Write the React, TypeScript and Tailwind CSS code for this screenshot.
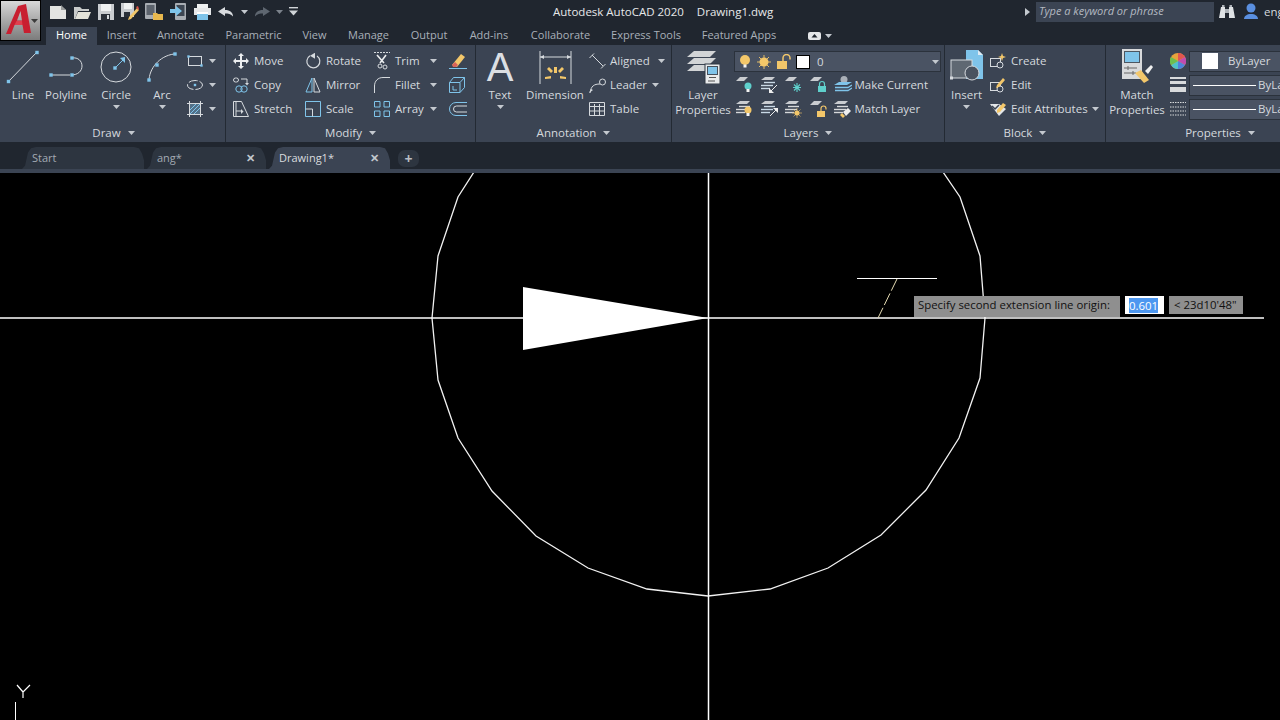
import React from "react";

const B = "#7fc4ea";
const L = "#d6dade";
const G = "#f3c76a";
const T = "#5fd0cc";

function Ic({ w = 16, h = 16, children }: { w?: number; h?: number; children: React.ReactNode }) {
  return (
    <svg width={w} height={h} viewBox={`0 0 ${w} ${h}`} fill="none" className="shrink-0 block">
      {children}
    </svg>
  );
}
const Caret = ({ c = "#c4c9cf" }: { c?: string }) => (
  <svg width="7" height="4" viewBox="0 0 7 4" className="shrink-0 block"><path d="M0 0h7L3.5 4z" fill={c} /></svg>
);
const Sq = ({ x, y, s = 3.4, c = B }: { x: number; y: number; s?: number; c?: string }) => (
  <rect x={x - s / 2} y={y - s / 2} width={s} height={s} fill={c} />
);

/* QAT */
const QNew = () => <Ic w={18} h={16}><path d="M1 2h11l5 4v9H1z" fill="#e3e4e2" /><path d="M12 1l5 5h-5z" fill="#9a9c9c" /></Ic>;
const QOpen = () => <Ic w={18} h={16}><path d="M1 3h6l2 2h7v2H5l-3 8H1z" fill="#c9cbca" /><path d="M5 8h13l-3 7H2z" fill="#e3e2d8" /></Ic>;
const QSave = () => <Ic w={16} h={16}><path d="M0 0h16v16H0z" fill="#c9ccd0" /><path d="M3 0h10v7H3z" fill="#eef0f1" /><path d="M3 10h9v6H3z" fill="#2a3039" /><path d="M9 11h2v4H9z" fill="#d6dade" /></Ic>;
const QSaveAs = () => <Ic w={18} h={18}><path d="M0 0h13v14H0z" fill="#c9ccd0" /><path d="M3 0h8v6H3z" fill="#eef0f1" /><path d="M3 9h6v5H3z" fill="#2a3039" /><path d="M8 14l8-9 2 2-8 9-3 1z" fill={G} /><path d="M15 4l2-1 1 3-1 1z" fill="#d8534b" /></Ic>;
const QCloud = () => <Ic w={18} h={18}><rect x="0" y="0" width="11" height="16" rx="1" fill="#a8adb3" /><rect x="1.5" y="2" width="8" height="10" fill="#5c636d" /><path d="M8 10h4l1 1h5v6H8z" fill="#e8b84e" /></Ic>;
const QCloud2 = () => <Ic w={17} h={18}><rect x="5" y="0" width="11" height="17" rx="1" fill="#a8adb3" /><rect x="6.5" y="2" width="8" height="11" fill="#3d4652" /><path d="M0 6h6V3l6 5-6 5v-3H0z" fill={B} /></Ic>;
const QPrint = () => <Ic w={17} h={16}><path d="M3 0h11v4H3z" fill="#eef0f1" /><path d="M0 4h17v7H0z" fill="#e6e8ea" /><path d="M3 8h11v8H3z" fill={B} /><path d="M3 8h11v2H3z" fill="#fff" /></Ic>;
const QUndo = () => <Ic w={16} h={12}><path d="M7 1L0 5.5 7 10V7.5c3 0 6 .5 8 3 0-4-3-6.5-8-6.5z" fill="#d8dbdf" /></Ic>;
const QRedo = () => <Ic w={16} h={12}><path d="M9 1l7 4.5L9 10V7.5c-3 0-6 .5-8 3 0-4 3-6.5 8-6.5z" fill="#5e6670" /></Ic>;
const QMenu = () => <Ic w={9} h={9}><path d="M0 0h9v1.4H0z" fill="#d0d4d8" /><path d="M0 3.5h9L4.5 8.5z" fill="#d0d4d8" /></Ic>;

/* Draw */
const ILine = () => <Ic w={34} h={34}><path d="M2 32L31 2" stroke={L} /><Sq x={2.5} y={31.5} /><Sq x={31} y={2.5} /></Ic>;
const IPoly = () => <Ic w={36} h={34}><path d="M3 25h19M24 8c6-1 10 3 10 8s-4 9-11 9" stroke={L} /><Sq x={3} y={25} /><Sq x={24} y={8} /><Sq x={24} y={25} /></Ic>;
const ICircle = () => <Ic w={34} h={34}><circle cx="17" cy="17" r="15" stroke={L} /><path d="M16 18L25 9" stroke={B} /><path d="M26 7v6l-5-5z" fill={B} /><Sq x={16} y={18} /></Ic>;
const IArc = () => <Ic w={32} h={34}><path d="M3 31c0-12 10-25 25-27" stroke={L} /><Sq x={3} y={30} /><Sq x={11} y={15} /><Sq x={29} y={4} /></Ic>;
const IRect = () => <Ic w={16} h={12}><rect x="1.5" y="1.5" width="13" height="9" stroke={L} /><Sq x={1.5} y={1.5} s={2.4} /><Sq x={14.5} y={10.5} s={2.4} /></Ic>;
const IEllipse = () => <Ic w={16} h={12}><ellipse cx="8" cy="6" rx="7.500" ry="4.500" stroke={L} strokeDasharray="9 2" /><Sq x={8} y={6} s={2.4} /></Ic>;
const IHatch = () => <Ic w={16} h={16}><path d="M2.500 0v16M13.500 0v16M0 2.500h16M0 13.500h16" stroke={L} /><rect x="3" y="3" width="10" height="10" fill={B} opacity=".35" /><path d="M3 9l6-6M3 13L13 3M7 13l6-6" stroke={B} /></Ic>;

/* Modify */
const IMove = () => <Ic w={16} h={16}><path d="M8 0l3 3H9v4h4V5l3 3-3 3V9H9v4h2l-3 3-3-3h2V9H3v2L0 8l3-3v2h4V3H5z" fill="#eceef0" /></Ic>;
const IRotate = () => <Ic w={16} h={16}><path d="M5 2.800a6.500 6.500 0 1 0 7 .2" stroke={L} strokeWidth="1.200" /><path d="M9 0v6L4 3z" fill={L} transform="translate(1 -.3)" /></Ic>;
const ITrim = () => <Ic w={16} h={18}><path d="M0 .5h16" stroke={L} strokeDasharray="2 1" /><path d="M3 3l7 8M12 3l-6 8" stroke="#eceef0" strokeWidth="1.600" /><circle cx="6" cy="14" r="2" stroke={L} /><circle cx="11" cy="15" r="2" stroke={L} /></Ic>;
const IEraser = () => <Ic w={18} h={18}><path d="M3 13L12 2l4 3-8 10z" fill={G} /><path d="M3 13l3-3 3 3-2 2H4z" fill="#d8635a" /><path d="M0 16.500h18" stroke={B} /></Ic>;
const ICopy = () => <Ic w={16} h={16}><rect x=".5" y="1" width="5" height="4" rx="2" stroke={L} /><path d="M8 2h6v5" stroke={L} /><path d="M12 6h4l-2 2.500z" fill={L} /><circle cx="6" cy="12" r="3.200" stroke={B} /><circle cx="11" cy="12" r="3.200" stroke={B} /></Ic>;
const IMirror = () => <Ic w={16} h={16}><path d="M7 1L1 15h6z" stroke={B} /><path d="M9 1l6 14H9z" stroke={L} /></Ic>;
const IFillet = () => <Ic w={16} h={16}><path d="M.5 16V9C.5 4 4 .5 9 .5h7" stroke={L} /></Ic>;
const IBox = () => <Ic w={16} h={16}><path d="M.5 5.500h10.500v10H.5zM.5 5.500l4-5h11v10l-4.500 5M11 5.500l4.500-5M4 9v4h4" stroke={B} /></Ic>;
const IStretch = () => <Ic w={16} h={16}><path d="M.5.500h8L15.500 15.500H.5z" stroke={L} /><path d="M3 1v14" stroke={L} /><path d="M3 10h5" stroke={L} /><path d="M8 8l2.500 2.500L8 13z" fill={L} /></Ic>;
const IScale = () => <Ic w={16} h={16}><path d="M.5.500h15v15H.5z" stroke={B} /><path d="M.5 8h7v7.500" stroke={L} /></Ic>;
const IArray = () => <Ic w={16} h={16}><path d="M.5.500h5.500v5.500H.5zM10 .5h5.500V6H10zM.5 10H6v5.500H.5zM10 10h5.500v5.500H10z" stroke={B} /></Ic>;
const IOffset = () => <Ic w={18} h={14}><path d="M18 .5H7a6.500 6.500 0 0 0 0 13h11" stroke={B} /><path d="M18 4H7.500a3 3 0 0 0 0 6H18" stroke={L} /></Ic>;

/* Annotation */
const ITextA = () => <span className="block text-[#dcdfe3] text-[40px] leading-[36px] font-['Liberation_Sans',sans-serif]">A</span>;
const IDim = () => <Ic w={33} h={33}><path d="M1 0v33M32 0v33" stroke={L} /><path d="M1 6h31" stroke={L} /><path d="M1 6l4-2v4zM32 6l-4-2v4z" fill={L} /><path d="M15 16h3v6h-3zM8 18l2-2 4 4-2 2zM25 18l-2-2-4 4 2 2zM6 26l6-1v2.500l-6 .5zM27 26l-6-1v2.500l6 .5z" fill={G} /></Ic>;
const IAligned = () => <Ic w={17} h={17}><path d="M3 2l11 11" stroke={L} /><path d="M.5 5L5 .5M12 15.500l4.500-4.500" stroke={L} /></Ic>;
const ILeader = () => <Ic w={17} h={17}><path d="M1 16c1-7 4-9 10-9" stroke={L} /><circle cx="13.500" cy="5" r="3" stroke={L} /><path d="M0 16l2-4 2 1z" fill={L} /></Ic>;
const ITable = () => <Ic w={16} h={14}><path d="M.5.500h15v13H.5zM.5 4.500h15M.5 9h15M5.500 2v11.500M10.500 2v11.500" stroke={L} /></Ic>;

/* Layers */
const Sheet = ({ y, c = "#d2d4d6" }: { y: number; c?: string }) => <path d={`M8 ${y}h22l-6 6H1z`} fill={c} />;
const ILayerProps = () => (
  <Ic w={34} h={34}>
    <Sheet y={1} /><Sheet y={8} /><Sheet y={15} />
    <rect x="19" y="14" width="15" height="20" fill="#e9ebec" stroke="#2f3742" />
    <rect x="21.500" y="16.500" width="10" height="8" fill={B} stroke="#46505c" />
    <path d="M23 27.500h7M29 31H22" stroke="#555" />
  </Ic>
);
const Lay1 = () => <path d="M4 1h8L8 5H0z" fill="#c9ccd0" />;
const Stack = ({ c = "#c9d9e6" }: { c?: string }) => <><path d="M4 1h10l-3 3H0z" fill="#c9ccd0" /><path d="M3 6.500h11" stroke={c} strokeWidth="1.400" /><path d="M0 9.500h12" stroke={c} strokeWidth="1.400" /><path d="M0 12.500h9" stroke={c} strokeWidth="1.400" /></>;
const Bulb = ({ x, y, c, r = 3.500 }: { x: number; y: number; c: string; r?: number }) => <><circle cx={x} cy={y} r={r} fill={c} /><rect x={x - 1.500} y={y + r - .5} width="3" height="3" fill="#f3f3f3" /></>;
const Lock = ({ x, y, c, open }: { x: number; y: number; c: string; open?: boolean }) => <><rect x={x} y={y} width="8" height="6" fill={c} /><path d={open ? `M${x + 4} ${y}v-2.500a2.500 2.500 0 0 1 5 0v1` : `M${x + 1.500} ${y}v-2a2.500 2.500 0 0 1 5 0v2`} stroke={c} strokeWidth="1.200" /></>;
const L1 = () => <Ic w={17} h={18}><Lay1 /><Bulb x={12} y={10} c={T} /></Ic>;
const L2 = () => <Ic w={17} h={18}><Stack /><path d="M16 9l-6 6" stroke="#eee" /><path d="M8 17v-5l5 5z" fill="#eee" /></Ic>;
const L3 = () => <Ic w={17} h={18}><Lay1 /><path d="M12 7v9M8 11.500h8M9 8.500l6 6M15 8.500l-6 6" stroke={T} strokeWidth="1.100" /></Ic>;
const L4 = () => <Ic w={17} h={18}><Lay1 /><Lock x={8} y={10} c={T} /></Ic>;
const LMake = () => <Ic w={18} h={18}><circle cx="10" cy="3.500" r="3.500" fill="#aab0b8" /><path d="M5 6h13l-5 3H0z" fill={B} /><path d="M1 11.500h13l4-2.500" stroke={B} strokeWidth="1.300" /><path d="M1 14.500h13l4-2.500" stroke={B} strokeWidth="1.300" /></Ic>;
const L5 = () => <Ic w={17} h={18}><Stack c="#d6d8da" /><Bulb x={12} y={10} c={G} /></Ic>;
const L6 = () => <Ic w={17} h={18}><Stack /><path d="M9 16l6-6" stroke="#eee" /><path d="M17 8v5l-5-5z" fill="#eee" /></Ic>;
const L7 = () => <Ic w={17} h={18}><Stack c="#d6d8da" /><circle cx="12" cy="13" r="2.500" fill={G} /><path d="M12 8v10M7 13h10M8.500 9.500l7 7M15.500 9.500l-7 7" stroke={G} strokeWidth=".6" /></Ic>;
const L8 = () => <Ic w={17} h={18}><Lay1 /><Lock x={7} y={11} c={G} open /></Ic>;
const LMatch = () => <Ic w={18} h={18}><Stack c="#d6d8da" /><path d="M9 12l5-4 3 3-5 5z" fill="#eee" /><path d="M8 13l3 3-2 2-3-3z" fill={G} /></Ic>;

/* Block */
const IInsert = () => (
  <Ic w={34} h={36}>
    <path d="M16 1h12l5 5v24H16z" fill={B} />
    <path d="M28 1l5 5h-5z" fill="#dfeaf2" />
    <rect x="1" y="11" width="21" height="18" fill="#5f6872" stroke={L} />
    <circle cx="22" cy="24" r="7" fill="#4a5360" stroke={L} />
    <Sq x={1.500} y={29} s={3} c={L} />
  </Ic>
);
const Doc = ({ c = L }: { c?: string }) => <><rect x=".5" y="5.500" width="10" height="8" stroke={c} /><circle cx="10" cy="12" r="3" fill="#3b4453" stroke={c} /></>;
const ICreate = () => <Ic w={16} h={16}><Doc /><path d="M12 0l1 3 3 1-3 1-1 3-1-3-3-1 3-1z" fill={G} /></Ic>;
const IEdit = () => <Ic w={16} h={16}><Doc /><path d="M7 8l6-7 2 2-6 7-3 1z" fill={G} /></Ic>;
const IAttr = () => <Ic w={17} h={16}><path d="M0 3h9l7 5-7 7z" fill="#e3e6e8" /><path d="M2 5l3 3 4-4" stroke="#3b4453" strokeWidth="1.500" /><path d="M7 9l6-7 3 2-6 7-3 1z" fill={G} /></Ic>;

/* Properties */
const IMatch = () => (
  <Ic w={32} h={36}>
    <rect x="1" y="0" width="20" height="30" fill="#d8dadc" />
    <rect x="3.500" y="2.500" width="15" height="11" fill={B} stroke="#4c5661" />
    <path d="M3 19h13M3 24h12M7 17v4M12 22v4" stroke="#666" />
    <path d="M14 24l6-3 8 10-5 3z" fill={G} /><path d="M24 22l6-6 2 2-5 7z" fill="#f0f0f0" />
  </Ic>
);
const IWheel = () => <svg width="16" height="16" viewBox="0 0 16 16" className="block shrink-0"><circle cx="8" cy="8" r="8" fill="#e8a33c" /><path d="M8 8L8 0a8 8 0 0 1 7 4z" fill="#e2564e" /><path d="M8 8l7-4a8 8 0 0 1 0 8z" fill="#c04bb0" /><path d="M8 8l7 4a8 8 0 0 1-7 4z" fill="#4f83dd" /><path d="M8 8v8a8 8 0 0 1-7-4z" fill="#4fc3c9" /><path d="M8 8l-7 4a8 8 0 0 1 0-8z" fill="#6cc04f" /></svg>;
const ILw = () => <Ic w={16} h={16}><path d="M0 0h16v2H0zM0 4h16v3H0zM0 10h16v5H0z" fill="#d8dadc" /></Ic>;
const ILt = () => <Ic w={16} h={14}><path d="M0 .5h16M0 5h16M0 9h16M0 13h16" stroke="#d8dadc" strokeDasharray="1.500 1" /></Ic>;

function Big({ w, icon, label, caret }: { w: number; icon: React.ReactNode; label: React.ReactNode; caret?: boolean }) {
  return (
    <div className="flex flex-col items-center shrink-0" style={{ width: w }}>
      <div className="h-[36px] flex items-center justify-center">{icon}</div>
      <div className="text-center leading-[15px] text-[#d5d9de] mt-[2px] whitespace-nowrap">{label}</div>
      {caret && <div className="mt-[3px]"><Caret /></div>}
    </div>
  );
}
function Small({ icon, label, w, caret }: { icon: React.ReactNode; label?: string; w: number; caret?: boolean }) {
  return (
    <div className="h-[24px] flex items-center relative shrink-0" style={{ width: w }}>
      <div className="w-[21px] shrink-0 flex items-center">{icon}</div>
      {label && <span className="text-[#d5d9de] whitespace-nowrap">{label}</span>}
      {caret && <span className="absolute right-0 top-[10px]"><Caret /></span>}
    </div>
  );
}
function Panel({ w, title, children, last }: { w: number; title: string; children: React.ReactNode; last?: boolean }) {
  return (
    <div className={`flex flex-col shrink-0 h-[97px] ${last ? "" : "border-r border-[#232a33]"}`} style={{ width: w }}>
      <div className="flex h-[76px] shrink-0 pt-[4px] overflow-hidden">{children}</div>
      <div className="flex items-center justify-center gap-[7px] text-[#d5d9de] h-[21px] shrink-0 pt-[3px]">
        <span>{title}</span><Caret />
      </div>
    </div>
  );
}

function FileTab({ label, w, active, close }: { label: string; w: number; active?: boolean; close?: boolean }) {
  return (
    <div
      className={`h-[22px] mt-[5px] [clip-path:polygon(0_100%,3px_85%,6px_25%,9px_6%,14px_0,calc(100%-10px)_0,calc(100%-5px)_6%,calc(100%-2px)_30%,100%_60%,100%_100%)] flex items-center pl-[10px] pr-[11px] shrink-0 justify-between ${active ? "bg-[#3b4453] text-[#d8dbdf]" : "bg-[#2d3540] text-[#a3aab3]"}`}
      style={{ width: w }}
    >
      <span>{label}</span>
      {close && <span className="text-[#c3c8ce] text-[11px] font-bold">✕</span>}
    </div>
  );
}

export default function App() {
  const tabs = [
    ["Insert", 49], ["Annotate", 69], ["Parametric", 77], ["View", 45], ["Manage", 63], ["Output", 58],
    ["Add-ins", 62], ["Collaborate", 81], ["Express Tools", 90], ["Featured Apps", 96],
  ] as [string, number][];
  return (
    <div className="w-full h-screen overflow-hidden bg-black flex flex-col text-[11.500px] font-['Open_Sans','Noto_Sans',sans-serif]">
      {/* Title bar */}
      <div className="flex h-[45px] bg-[#20262f] shrink-0">
        <div className="w-[41px] h-[41px] border border-black bg-gradient-to-b from-[#d8d8d8] to-[#7c7c7c] relative shrink-0 overflow-hidden">
          <svg width="30" height="34" viewBox="0 0 30 34" className="absolute left-[3px] top-[2px]">
            <path d="M2 31L14 3l8-2 5 29h-7l-1.500-8H10.500L7 31zM13 17.500h5L16.500 8z" fill="#c81f30" fillRule="evenodd" />
            <path d="M10.500 22H18.500L18 18H12.500z" fill="#e0404e" />
          </svg>
          <span className="absolute right-[2px] top-[18px]"><Caret c="#3c3c3c" /></span>
        </div>
        <div className="flex-1 flex flex-col pl-[5px] min-w-0">
          <div className="h-[27px] flex items-start pt-[1px]">
            <div className="flex items-center h-[21px]">
              {[QNew, QOpen, QSave, QSaveAs, QCloud, QCloud2, QPrint, QUndo].map((I, i) => (
                <div key={i} className="w-[24px] flex justify-center"><I /></div>
              ))}
              <div className="w-[12px] flex justify-center"><Caret /></div>
              <div className="w-[24px] flex justify-center"><QRedo /></div>
              <div className="w-[10px] flex justify-center"><Caret c="#7b828b" /></div>
              <div className="w-[18px] flex justify-center"><QMenu /></div>
            </div>
            <div className="ml-[251px] w-[217px] h-[21px] flex items-center gap-[13px] text-[#e6e8ea] whitespace-nowrap shrink-0">
              <span>Autodesk AutoCAD 2020</span><span>Drawing1.dwg</span>
            </div>
            <div className="ml-[255px] flex items-center h-[21px]">
              <svg width="5" height="8" viewBox="0 0 5 8" className="block"><path d="M0 0l5 4-5 4z" fill="#c4c9cf" /></svg>
              <div className="ml-[6px] w-[178px] h-[20px] bg-[#3b4453] flex items-center pl-[3px] text-[#b3b9c1] italic text-[11px]">Type a keyword or phrase</div>
              <div className="ml-[5px] w-[16px]">
                <Ic w={16} h={14}>
                  <path d="M2 2h4v11H0zM10 2h4l2 11h-6z" fill="#dfe2e5" />
                  <path d="M3 0h2.500v2H3zM10.500 0H13v2h-2.500zM6 4h4v4H6z" fill="#aeb3b9" />
                </Ic>
              </div>
              <div className="ml-[8px] w-[16px]">
                <Ic w={16} h={17}><circle cx="8" cy="5" r="4.500" fill="#5a8fe0" /><path d="M1 16c0-3 3-5 7-5s7 2 7 5z" fill="#5a8fe0" /></Ic>
              </div>
              <span className="ml-[5px] text-[#d5d9de]">eng</span>
            </div>
          </div>
          <div className="h-[18px] flex items-center text-[11px] pb-[1px]">
            <div className="w-[51px] h-[18px] bg-[#3b4453] text-white flex items-center justify-center shrink-0 pb-[1px]">Home</div>
            {tabs.map(([t, w]) => (
              <div key={t} className="text-[#a9b0b9] text-center shrink-0 whitespace-nowrap" style={{ width: w }}>{t}</div>
            ))}
            <div className="ml-[21px] flex items-center gap-[4px]">
              <svg width="13" height="8" viewBox="0 0 13 8" className="block"><rect width="13" height="8" rx="2" fill="#e4e6e8" /><path d="M6.500 2l3 3.500h-6z" fill="#20262f" /></svg>
              <Caret />
            </div>
          </div>
        </div>
      </div>

      {/* Ribbon */}
      <div className="flex h-[97px] bg-[#3b4453] pl-[2px] shrink-0 overflow-hidden">
        <Panel w={224} title="Draw">
          <Big w={42} icon={<ILine />} label="Line" />
          <Big w={44} icon={<IPoly />} label="Polyline" />
          <Big w={56} icon={<ICircle />} label="Circle" caret />
          <Big w={36} icon={<IArc />} label="Arc" caret />
          <div className="flex flex-col pl-[7px]">
            <Small icon={<IRect />} w={29} caret />
            <Small icon={<IEllipse />} w={29} caret />
            <Small icon={<IHatch />} w={29} caret />
          </div>
        </Panel>
        <Panel w={250} title="Modify">
          <div className="flex flex-col pl-[7px] w-[79px] shrink-0">
            <Small icon={<IMove />} label="Move" w={72} />
            <Small icon={<ICopy />} label="Copy" w={72} />
            <Small icon={<IStretch />} label="Stretch" w={72} />
          </div>
          <div className="flex flex-col w-[69px] shrink-0">
            <Small icon={<IRotate />} label="Rotate" w={69} />
            <Small icon={<IMirror />} label="Mirror" w={69} />
            <Small icon={<IScale />} label="Scale" w={69} />
          </div>
          <div className="flex flex-col w-[75px] shrink-0">
            <Small icon={<ITrim />} label="Trim" w={63} caret />
            <Small icon={<IFillet />} label="Fillet" w={63} caret />
            <Small icon={<IArray />} label="Array" w={63} caret />
          </div>
          <div className="flex flex-col">
            <Small icon={<IEraser />} w={20} />
            <Small icon={<IBox />} w={20} />
            <Small icon={<IOffset />} w={20} />
          </div>
        </Panel>
        <Panel w={196} title="Annotation">
          <Big w={48} icon={<ITextA />} label="Text" caret />
          <Big w={62} icon={<IDim />} label="Dimension" />
          <div className="flex flex-col pl-[3px]">
            <Small icon={<IAligned />} label="Aligned" w={76} caret />
            <Small icon={<ILeader />} label="Leader" w={70} caret />
            <Small icon={<ITable />} label="Table" w={70} />
          </div>
        </Panel>
        <Panel w={273} title="Layers">
          <Big w={62} icon={<ILayerProps />} label={<>Layer<br />Properties</>} />
          <div className="flex flex-col">
            <div className="w-[207px] h-[21px] mt-[2px] mb-[1px] shrink-0 bg-[#4a5363] border border-[#2b323c] flex items-center pl-[2px] relative">
              <Ic w={16} h={16}><Bulb x={8} y={6} c={G} r={5} /></Ic>
              <div className="w-[3px]" />
              <Ic w={16} h={16}><circle cx="8" cy="8" r="4.500" fill={G} /><path d="M8 1v14M1 8h14M3 3l10 10M13 3L3 13" stroke={G} strokeWidth=".9" /></Ic>
              <div className="w-[4px]" />
              <Ic w={16} h={16}><path d="M7 7V4a3.500 3.500 0 0 1 7 0v1.500" stroke={G} strokeWidth="1.500" /><rect x="1" y="7" width="10" height="8" fill={G} /></Ic>
              <div className="ml-[4px] w-[14px] h-[14px] bg-white border border-black" />
              <span className="ml-[7px] text-[#d5d9de]">0</span>
              <span className="absolute right-[1px] top-[8px]"><Caret /></span>
            </div>
            <div className="flex h-[24px] shrink-0 items-center">
              {[L1, L2, L3, L4, LMake].map((I, i) => <div key={i} className="w-[24.500px] pl-[2px]"><I /></div>)}
              <span className="text-[#d5d9de] ml-[-2px] whitespace-nowrap">Make Current</span>
            </div>
            <div className="flex h-[24px] shrink-0 items-center">
              {[L5, L6, L7, L8, LMatch].map((I, i) => <div key={i} className="w-[24.500px] pl-[2px]"><I /></div>)}
              <span className="text-[#d5d9de] ml-[-2px] whitespace-nowrap">Match Layer</span>
            </div>
          </div>
        </Panel>
        <Panel w={161} title="Block">
          <Big w={43} icon={<IInsert />} label="Insert" caret />
          <div className="flex flex-col pl-[2px]">
            <Small icon={<ICreate />} label="Create" w={109} />
            <Small icon={<IEdit />} label="Edit" w={109} />
            <Small icon={<IAttr />} label="Edit Attributes" w={109} caret />
          </div>
        </Panel>
        <Panel w={228} title="Properties" last>
          <Big w={62} icon={<IMatch />} label={<>Match<br />Properties</>} />
          <div className="flex flex-col pl-[1px]">
            {[
              [<IWheel key="a" />, "color"],
              [<ILw key="b" />, "lw"],
              [<ILt key="c" />, "lt"],
            ].map(([ic, k], i) => (
              <div key={i} className="flex items-center h-[24px] gap-[3px]">
                <div className="w-[17px] flex justify-center">{ic}</div>
                <div className="w-[120px] h-[21px] bg-[#4a5363] border border-[#2b323c] flex items-center text-[#d5d9de] whitespace-nowrap overflow-hidden">
                  {k === "color" ? (
                    <>
                      <div className="ml-[12px] w-[16px] h-[16px] bg-white" />
                      <span className="ml-[10px]">ByLayer</span>
                    </>
                  ) : (
                    <>
                      <div className="ml-[3px] w-[63px] h-px bg-white" />
                      <span className="ml-[2px]">ByLayer</span>
                    </>
                  )}
                </div>
              </div>
            ))}
          </div>
        </Panel>
      </div>

      {/* File tabs */}
      <div className="h-[27px] bg-[#20262f] flex pl-[22px] gap-[3px] shrink-0 overflow-hidden text-[11px]">
        <FileTab label="Start" w={122} />
        <FileTab label="ang*" w={119} close />
        <FileTab label="Drawing1*" w={121} active close />
        <div className="mt-[8px] ml-[5px] w-[21px] h-[17px] rounded-[7px] bg-[#2d3540] flex items-center justify-center text-[#b8bdc4] text-[14px] font-bold leading-none">+</div>
      </div>
      <div className="h-[4px] bg-[#3b4453] shrink-0" />

      {/* Canvas */}
      <div className="flex-1 relative bg-black overflow-hidden">
        <svg width="1280" height="547" viewBox="0 173 1280 547" className="absolute inset-0 block" fill="none">
          <polyline
            stroke="#f2f2f2"
            strokeWidth="1.300"
            points="474,172 458,197 438,256 432,318 438,380 458,438 492,491 536,536 588,568 647,589 708,596 770,589 828,568 881,535 926,490 959,438 980,378 985,318 980,256 960,197 943,172"
          />
          <path d="M523 287L708 318L523 350Z" fill="#fff" />
          <path d="M0 318H1264" stroke="#fff" strokeWidth="1.500" />
          <path d="M708.500 172V720" stroke="#fff" strokeWidth="1.500" />
          <path d="M857 278.500H937" stroke="#fff" />
          <path d="M897 279L878 318" stroke="#e6dcb4" strokeDasharray="13 3" />
          <path d="M17 685L23 692M30 685L23 692V698" stroke="#fff" strokeWidth="1.200" />
          <path d="M15.500 702V720" stroke="#fff" />
        </svg>
        <div className="absolute left-[914px] top-[123px] flex items-start text-[11.400px]">
          <div className="w-[206px] h-[21px] bg-[#8f8f8f] text-[#111] flex items-center pl-[4px] pb-[3px] whitespace-nowrap">Specify second extension line origin:</div>
          <div className="ml-[5px] w-[39px] h-[18px] bg-white flex items-center pl-[4px]">
            <span className="bg-[#4d97f0] text-white leading-[15px]">0.601</span>
          </div>
          <div className="ml-[5px] w-[74px] h-[18px] bg-[#8f8f8f] text-[#111] flex items-center pl-[5px] whitespace-nowrap">&lt; 23d10'48"</div>
        </div>
      </div>
    </div>
  );
}
